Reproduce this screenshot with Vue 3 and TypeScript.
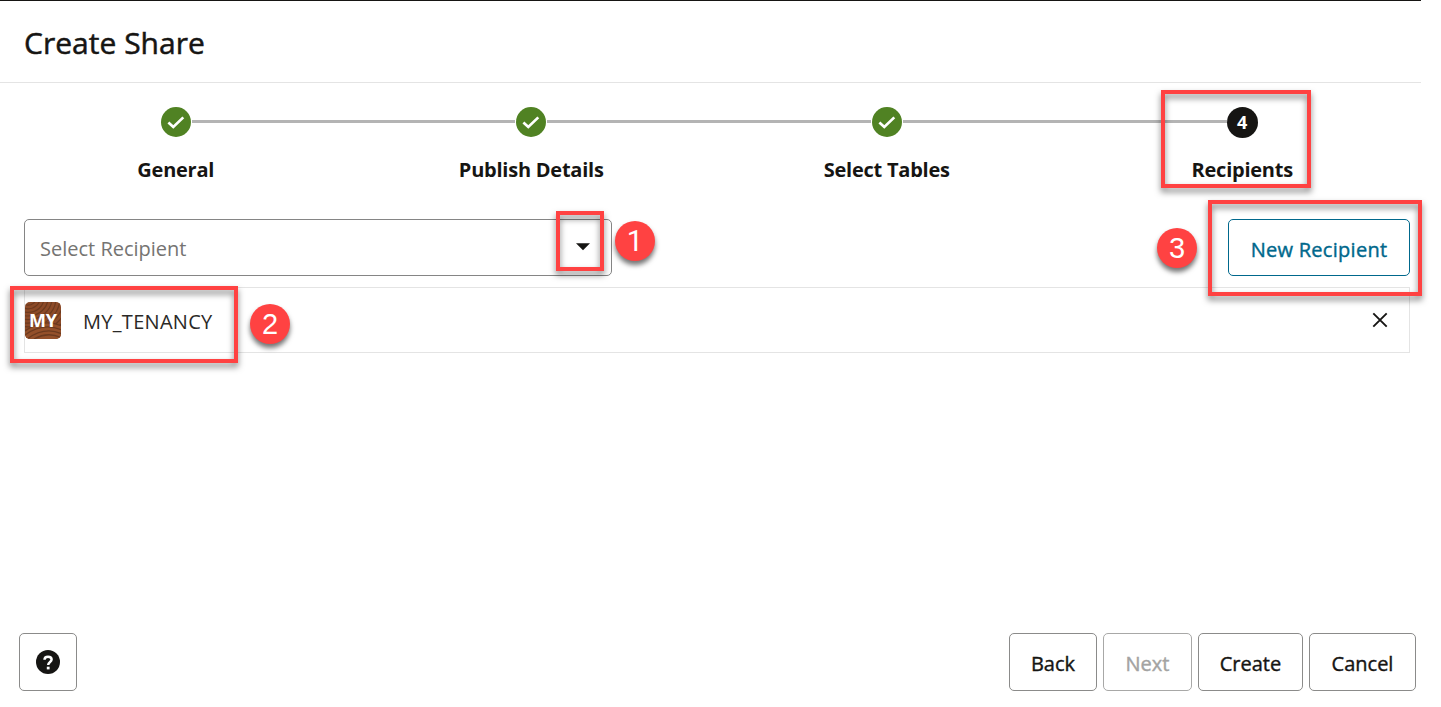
<script setup lang="ts">
interface Step {
  label: string
  done: boolean
  key: string
}

const steps: Step[] = [
  { label: 'General', done: true, key: 'general' },
  { label: 'Publish Details', done: true, key: 'publish' },
  { label: 'Select Tables', done: true, key: 'tables' },
  { label: 'Recipients', done: false, key: 'recipients' },
]

const actions = [
  { label: 'Back', key: 'back', disabled: false },
  { label: 'Next', key: 'next', disabled: true },
  { label: 'Create', key: 'create', disabled: false },
  { label: 'Cancel', key: 'cancel', disabled: false },
]

const rings: number[] = Array.from({ length: 11 }, (_, i) => 4 + i * 4)
</script>

<template>
  <div class="page">
    <header class="header">
      <h1><span class="t title">Create Share</span></h1>
    </header>

    <ol class="train">
      <li v-for="(step, i) in steps" :key="step.key" class="step">
        <div class="track">
          <span class="line" :class="{ hidden: i === 0 }"></span>
          <svg v-if="step.done" class="dot" viewBox="0 0 30 30">
            <circle cx="15" cy="15" r="15" fill="#508223" />
            <path d="M7.4 15.4 L12.3 20 L22.3 10.4" fill="none" stroke="#fff" stroke-width="2.7" />
          </svg>
          <span v-else class="dot current">{{ i + 1 }}</span>
          <span class="line" :class="{ hidden: i === steps.length - 1 }"></span>
        </div>
        <div class="label"><span :class="['t', step.key]">{{ step.label }}</span></div>
      </li>
    </ol>

    <main class="content">
      <div class="toolbar">
        <div class="select">
          <span class="t placeholder">Select Recipient</span>
          <svg class="caret" width="14" height="8" viewBox="0 0 14 8"><path d="M0 .3H14L7 7.3Z" fill="#161513" /></svg>
        </div>
        <button class="btn new"><span class="t newtext">New Recipient</span></button>
      </div>
      <div class="row">
        <div class="avatar">
          <svg viewBox="0 0 37 37">
            <rect width="37" height="37" fill="#8c4a28" />
            <g fill="none" stroke="#6c3a1f" stroke-width="1.2">
              <ellipse v-for="r in rings" :key="'a' + r" cx="3" cy="-4" :rx="r" :ry="r * 0.9" />
            </g>
            <path d="M0 29Q18 16 37 24V37H0Z" fill="#94502a" />
            <g fill="none" stroke="#6c3a1f" stroke-width="1.3">
              <path d="M0 29Q18 16 37 24M0 33Q18 20 37 28M2 37Q20 24 37 32M9 37Q23 29 37 36" />
            </g>
          </svg>
          <span class="initials">MY</span>
        </div>
        <span class="t tenancy">MY_TENANCY</span>
        <svg class="close" width="16" height="16" viewBox="0 0 16 16"><path d="M1.3 1.3L14.7 14.7M14.7 1.3L1.3 14.7" stroke="#161513" stroke-width="1.9" /></svg>
      </div>
    </main>

    <footer class="footer">
      <button class="btn help">
        <svg width="24" height="24" viewBox="0 0 24 24">
          <circle cx="12" cy="12" r="12" fill="#161513" />
          <path d="M8.5 9.8C8.5 7.8 10 6.8 12 6.8S15.6 7.9 15.6 9.6C15.6 12 12.2 11.9 12.2 15" fill="none" stroke="#fff" stroke-width="2.5" />
          <rect x="10.8" y="16.7" width="2.8" height="2.7" fill="#fff" />
        </svg>
      </button>
      <div class="actions">
        <button v-for="a in actions" :key="a.key" :class="['btn', 'b-' + a.key]" :disabled="a.disabled">
          <span class="t">{{ a.label }}</span>
        </button>
      </div>
    </footer>

    <div class="mark m-step"></div>
    <div class="mark m-caret"></div>
    <div class="mark m-new"></div>
    <div class="mark m-row"></div>
    <div class="badge n1">1</div>
    <div class="badge n2">2</div>
    <div class="badge n3">3</div>
  </div>
</template>

<style>
body { background: #fff; overflow: hidden; }
</style>

<style scoped>
* { box-sizing: border-box; }
.page {
  position: relative;
  display: flex;
  flex-direction: column;
  width: 1441px;
  height: 707px;
  overflow: hidden;
  background: #fff;
  color: #161513;
  font-family: "Open Sans", "Noto Sans", sans-serif;
  font-size: 20px;
}
.t { display: inline-block; white-space: nowrap; }
.header {
  width: 1421px;
  height: 83px;
  border-top: 1px solid #161513;
  border-bottom: 1px solid #e4e4e4;
  padding-left: 24px;
}
h1 { margin: 0; font-size: 30px; font-weight: 500; line-height: 84px; }
.title { letter-spacing: 0.02px; -webkit-text-stroke: 0.5px currentColor; }
.train {
  display: grid;
  grid-template-columns: repeat(4, 355.5px);
  margin: 24px 0 0 -2px;
  padding: 0;
  list-style: none;
}
.step { height: 112px; }
.track { display: flex; align-items: flex-start; height: 31px; }
.line { flex: 1; height: 3px; margin-top: 13px; background: #b4b4b4; }
.line.hidden { visibility: hidden; }
.dot { display: block; width: 30px; height: 30px; margin: 0 1px; }
.dot.current {
  width: 31px;
  height: 31px;
  margin: 0;
  border-radius: 50%;
  background: #161513;
  color: #fff;
  font-size: 18px;
  font-weight: 700;
  line-height: 30px;
  text-align: center;
}
.label { font-weight: 700; line-height: 28px; padding-top: 18px; text-align: center; letter-spacing: -0.24px; }
.content { padding: 0 31px 0 24px; }
.toolbar { display: flex; justify-content: space-between; height: 57px; }
.select {
  display: flex;
  align-items: center;
  justify-content: space-between;
  width: 588px;
  border: 1px solid #858585;
  border-radius: 5px;
  padding: 0 21px 0 15px;
  color: #757472;
}
.placeholder { padding-top: 2px; }
.caret { margin-top: -1px; }
.btn {
  display: flex;
  align-items: center;
  justify-content: center;
  height: 58px;
  padding: 2px 0 0;
  border: 1px solid #8b8b8a;
  border-radius: 5px;
  background: #fff;
  color: #161513;
  font: 500 20px "Open Sans", "Noto Sans", sans-serif;
  -webkit-text-stroke: 0.4px currentColor;
}
.btn:disabled { color: #a3a3a2; border-color: #a8a8a7; }
.new { width: 182px; height: 57px; padding-top: 3px; border-color: #00688c; color: #00688c; letter-spacing: 0.28px; }
.row {
  display: flex;
  align-items: center;
  height: 66px;
  margin-top: 11px;
  border: 1px solid #e4e4e4;
}
.avatar { position: relative; width: 36px; height: 37px; border-radius: 5px; overflow: hidden; }
.avatar svg { display: block; width: 37px; height: 37px; }
.initials {
  position: absolute;
  inset: 0;
  color: #fff;
  font-size: 18px;
  font-weight: 700;
  line-height: 37px;
  text-align: center;
}
.tenancy { margin-left: 22px; padding-top: 2px; letter-spacing: 0.3px; color: #2a2927; }
.close { margin: 0 21px 0 auto; }
.footer {
  display: flex;
  justify-content: space-between;
  margin-top: auto;
  padding: 0 25px 16px 19px;
}
.help { width: 58px; padding: 0; }
.actions { display: flex; gap: 6px; }
.b-back { width: 88px; }
.b-next { width: 89px; }
.b-create { width: 105px; }
.b-cancel { width: 107px; }
.mark {
  position: absolute;
  border: 4px solid #ff4242;
  filter: drop-shadow(0 4px 3px rgba(0, 0, 0, 0.5));
}
.m-step { left: 1161px; top: 90px; width: 150px; height: 98px; }
.m-caret { left: 556px; top: 211px; width: 48px; height: 60px; }
.m-new { left: 1208px; top: 200px; width: 214px; height: 96px; }
.m-row { left: 10px; top: 286px; width: 228px; height: 77px; }
.badge {
  position: absolute;
  width: 40px;
  height: 40px;
  border-radius: 50%;
  background: #ff4242;
  box-shadow: 0 4px 5px rgba(0, 0, 0, 0.55);
  color: #fff;
  font: 29px/41px "Liberation Sans", Arial, sans-serif;
  text-align: center;
}
.n1 { left: 615px; top: 221px; font-family: Roboto, sans-serif; }
.n2 { left: 250px; top: 304px; }
.n3 { left: 1157px; top: 228px; }
</style>
